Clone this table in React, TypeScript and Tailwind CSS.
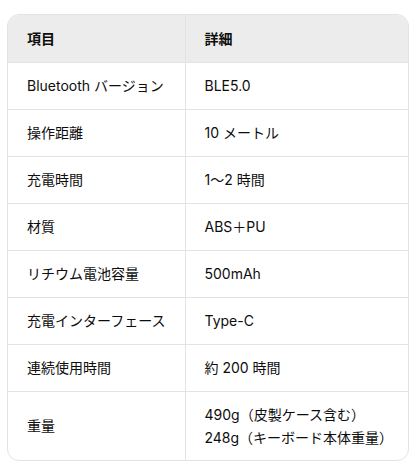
import React from 'react';

const rows: { label: string; value: React.ReactNode }[] = [
  { label: 'Bluetooth バージョン', value: 'BLE5.0' },
  { label: '操作距離', value: '10 メートル' },
  { label: '充電時間', value: '1〜2 時間' },
  { label: '材質', value: 'ABS＋PU' },
  { label: 'リチウム電池容量', value: '500mAh' },
  { label: '充電インターフェース', value: 'Type-C' },
  { label: '連続使用時間', value: '約 200 時間' },
  {
    label: '重量',
    value: (
      <>
        490g（皮製ケース含む）
        <br />
        248g（キーボード本体重量）
      </>
    ),
  },
];

export default function App() {
  return (
    <div
      className="bg-white pt-[14px] px-[7px] text-[14px] text-[#0d0d0d]"
      style={{ fontFamily: 'Inter, "Noto Sans CJK JP", sans-serif' }}
    >
      <div className="overflow-hidden rounded-xl border border-[#e3e3e3]">
        <table className="w-full border-collapse">
          <thead>
            <tr className="bg-[#ececec]">
              <th className="h-[47px] w-[177px] border-r border-[#e3e3e3] px-[19px] text-left font-semibold">
                項目
              </th>
              <th className="h-[47px] px-[19px] text-left font-semibold">詳細</th>
            </tr>
          </thead>
          <tbody>
            {rows.map((row, i) => (
              <tr key={i} className="border-t border-[#e3e3e3]">
                <td
                  className={`border-r border-[#e3e3e3] px-[19px] ${
                    i === rows.length - 1 ? 'h-[69px]' : 'h-[47px]'
                  }`}
                >
                  {row.label}
                </td>
                <td className="px-[19px] leading-[23px]">{row.value}</td>
              </tr>
            ))}
          </tbody>
        </table>
      </div>
    </div>
  );
}
